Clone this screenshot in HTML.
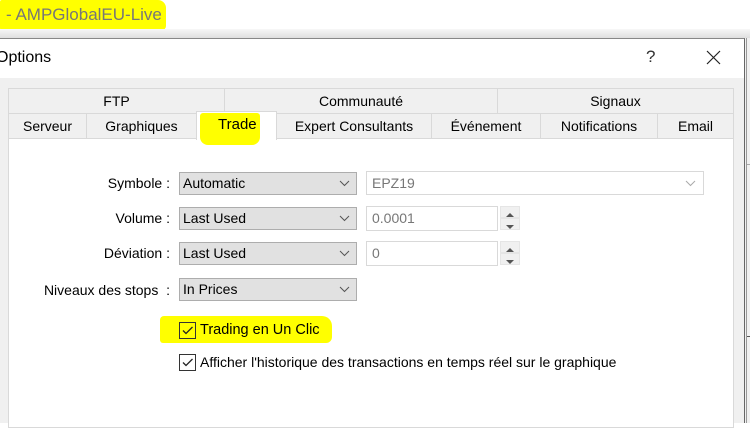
<!DOCTYPE html>
<html><head><style>
*{margin:0;padding:0;box-sizing:border-box}
body{width:750px;height:423px;overflow:hidden;background:#fff;position:relative;font-family:"Liberation Sans",sans-serif;color:#000}
.a{position:absolute}
.t{font-size:14px}
.tab{position:absolute;background:#f0f0f0;border:1px solid #d9d9d9;text-align:center;font-size:14px;line-height:25px}
.cb{position:absolute;left:179px;width:178px;height:23px;background:#e1e1e1;border:1px solid #adadad;font-size:14px;line-height:21px;padding-left:3px}
.cb svg{position:absolute;right:6px;top:7px}
.lbl{position:absolute;right:580px;font-size:14px;text-align:right;white-space:nowrap}
.inp{position:absolute;background:#fff;border:1px solid #d9d9d9;font-size:14px;color:#777;line-height:22px;padding-left:5px}
.sp{position:absolute;left:500px;width:20px;height:12px;background:#f0f0f0;border:1px solid #e5e5e5}
.chk{position:absolute;left:179px;width:17px;height:17px;border:1px solid #333;background:#fff}
</style></head><body>
<div class="a" style="left:0;top:0;width:166px;height:30px;background:#ffff00;border-radius:2px 8px 4px 2px"></div>
<div class="a" style="left:6px;top:5px;font-size:17px;color:#777">- AMPGlobalEU-Live</div>
<div class="a" style="left:0;top:29px;width:750px;height:10px;background:linear-gradient(#f7f7f7,#dcdcdc)"></div>
<div class="a" style="left:744px;top:38px;width:6px;height:385px;background:#f0f0f0;border-left:1px solid #555"></div>
<div class="a" style="left:746px;top:38px;width:1px;height:385px;background:#999"></div>
<div class="a" style="left:747px;top:164px;width:3px;height:1px;background:#aaa"></div>
<div class="a" style="left:747px;top:336px;width:3px;height:1px;background:#555"></div>
<div class="a" style="left:0;top:38px;width:745px;height:385px;background:#f0f0f0;border-right:1px solid #666;border-top:1px solid #888"></div>
<div class="a" style="left:0;top:39px;width:744px;height:39px;background:#fff"></div>
<div class="a" style="left:-4px;top:49px;font-size:16px">Options</div>
<div class="a" style="left:646px;top:47px;font-size:17px;color:#333">?</div>
<svg class="a" style="left:706px;top:50px" width="15" height="15"><path d="M1 1L14 14M14 1L1 14" stroke="#222" stroke-width="1.2"/></svg>
<div class="a" style="left:8px;top:138px;width:726px;height:290px;background:#fff;border:1px solid #d9d9d9"></div>
<div class="tab" style="left:8px;top:88px;width:217px;height:26px">FTP</div>
<div class="tab" style="left:224px;top:88px;width:274px;height:26px">Communauté</div>
<div class="tab" style="left:497px;top:88px;width:237px;height:26px">Signaux</div>
<div class="tab" style="left:8px;top:113px;width:79px;height:26px">Serveur</div>
<div class="tab" style="left:86px;top:113px;width:111px;height:26px">Graphiques</div>
<div class="tab" style="left:276px;top:113px;width:156px;height:26px">Expert Consultants</div>
<div class="tab" style="left:431px;top:113px;width:110px;height:26px">Événement</div>
<div class="tab" style="left:540px;top:113px;width:118px;height:26px">Notifications</div>
<div class="tab" style="left:657px;top:113px;width:77px;height:26px">Email</div>
<div class="a" style="left:196px;top:111px;width:81px;height:29px;background:#fff;border:1px solid #d9d9d9;border-bottom:none"></div>
<div class="a" style="left:200px;top:113px;width:60px;height:32px;background:#ffff00;border-radius:3px 3px 8px 8px"></div>
<div class="a" style="left:218px;top:116px;font-size:15px">Trade</div>
<div class="lbl" style="top:175px">Symbole :</div>
<div class="lbl" style="top:210px">Volume :</div>
<div class="lbl" style="top:245px">Déviation :</div>
<div class="lbl" style="top:282px">Niveaux des stops&nbsp;&nbsp;:</div>
<div class="cb" style="top:172px">Automatic<svg width="11" height="7"><path d="M1 1L5.5 5.5L10 1" stroke="#555" fill="none"/></svg></div>
<div class="cb" style="top:207px">Last Used<svg width="11" height="7"><path d="M1 1L5.5 5.5L10 1" stroke="#555" fill="none"/></svg></div>
<div class="cb" style="top:242px">Last Used<svg width="11" height="7"><path d="M1 1L5.5 5.5L10 1" stroke="#555" fill="none"/></svg></div>
<div class="cb" style="top:278px">In Prices<svg width="11" height="7"><path d="M1 1L5.5 5.5L10 1" stroke="#555" fill="none"/></svg></div>
<div class="inp" style="left:366px;top:171px;width:338px;height:24px">EPZ19<svg style="position:absolute;right:7px;top:8px" width="11" height="7"><path d="M1 1L5.5 5.5L10 1" stroke="#aaa" fill="none"/></svg></div>
<div class="inp" style="left:366px;top:206px;width:132px;height:25px">0.0001</div>
<div class="inp" style="left:366px;top:241px;width:132px;height:25px">0</div>
<div class="sp" style="top:206px"><svg width="18" height="10"><path d="M5 7L9 3L13 7Z" fill="#555"/></svg></div>
<div class="sp" style="top:218px"><svg width="18" height="10"><path d="M5 3L9 7L13 3Z" fill="#555"/></svg></div>
<div class="sp" style="top:241px"><svg width="18" height="10"><path d="M5 7L9 3L13 7Z" fill="#555"/></svg></div>
<div class="sp" style="top:253px"><svg width="18" height="10"><path d="M5 3L9 7L13 3Z" fill="#555"/></svg></div>
<div class="a" style="left:160px;top:316px;width:172px;height:27px;background:#ffff00;border-radius:4px 10px 6px 3px"></div>
<div class="chk" style="top:322px;background:#ffff00"><svg width="15" height="15"><path d="M3 7.5L6 10.5L12.5 4" stroke="#222" stroke-width="1.3" fill="none"/></svg></div>
<div class="a t" style="left:200px;top:322px;font-size:14.5px">Trading en Un Clic</div>
<div class="chk" style="top:354px"><svg width="15" height="15"><path d="M3 7.5L6 10.5L12.5 4" stroke="#222" stroke-width="1.3" fill="none"/></svg></div>
<div class="a t" style="left:200px;top:354px">Afficher l'historique des transactions en temps réel sur le graphique</div>
</body></html>
